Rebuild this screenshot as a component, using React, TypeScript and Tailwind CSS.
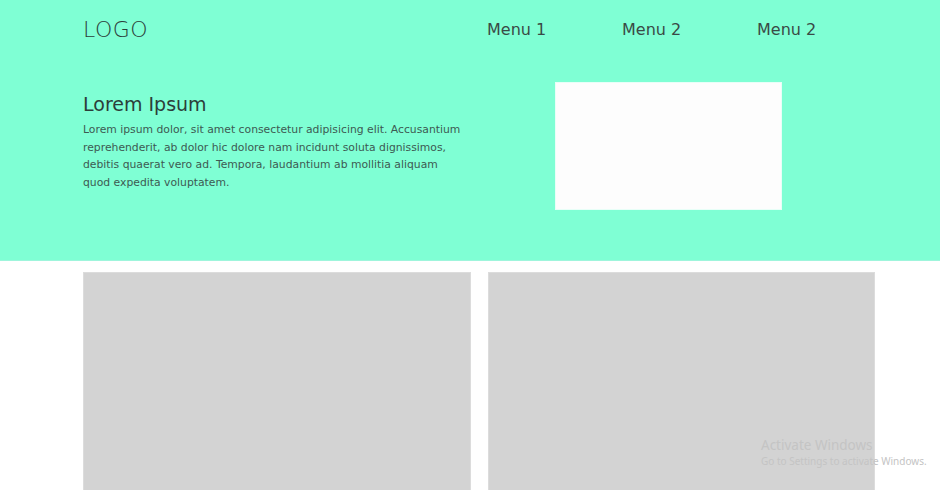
import React from 'react';

const font = { fontFamily: '"Century Gothic", "DejaVu Sans", sans-serif' };

export default function App() {
  return (
    <div className="relative w-[940px] h-[490px] overflow-hidden bg-white" style={font}>
      <header className="h-[261px] bg-[#7fffd4] border-b border-[#9ff5dc]">
        <nav className="ml-[83px] w-[792px] h-[58px] flex items-center justify-between">
          <div className="text-[22px] text-[#2c3e3a] tracking-[0.5px] font-light">LOGO</div>
          <ul className="flex mr-[-17px] pt-[2px]">
            <li className="w-[135px] text-[16px] text-[#3a4a46]">Menu 1</li>
            <li className="w-[135px] text-[16px] text-[#3a4a46]">Menu 2</li>
            <li className="w-[135px] text-[16px] text-[#3a4a46]">Menu 2</li>
          </ul>
        </nav>
        <section className="ml-[83px] w-[792px] flex mt-[24px]">
          <div className="w-[396px] pt-[10px]">
            <h1 className="text-[19px] leading-[24px] text-[#2c3e3a]">Lorem Ipsum</h1>
            <p className="mt-[5px] w-[384px] text-[10.8px] leading-[17.5px] text-[#3d5a52]">
              Lorem ipsum dolor, sit amet consectetur adipisicing elit. Accusantium reprehenderit, ab dolor hic dolore nam incidunt soluta dignissimos, debitis quaerat vero ad. Tempora, laudantium ab mollitia aliquam quod expedita voluptatem.
            </p>
          </div>
          <div className="ml-[76px] w-[227px] h-[128px] bg-[#fdfdfd] border border-[#e8fff8]" />
        </section>
      </header>
      <main className="ml-[83px] w-[792px] mt-[11px] grid grid-cols-2 gap-[17px]">
        <div className="h-[240px] bg-[#d3d3d3] border border-[#dcdcdc]" />
        <div className="h-[240px] bg-[#d3d3d3] border border-[#dcdcdc]" />
      </main>
      <div className="absolute left-[761px] top-[436px] text-[#c4c4c4]" style={{ fontFamily: '"Noto Sans", "Open Sans", sans-serif' }}>
        <div className="text-[13.5px] leading-[18px]">Activate Windows</div>
        <div className="text-[10px] leading-[14px]">Go to Settings to activate Windows.</div>
      </div>
    </div>
  );
}
